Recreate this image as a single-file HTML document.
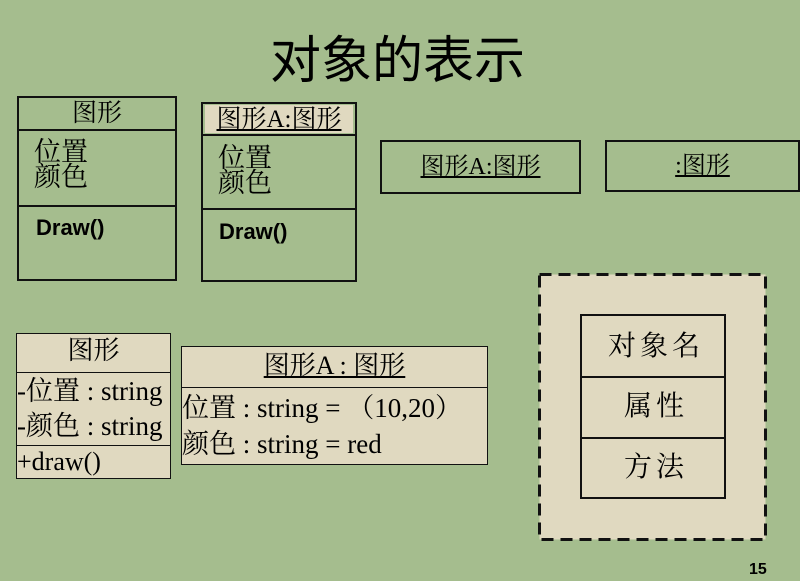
<!DOCTYPE html>
<html><head><meta charset="utf-8"><style>
*{margin:0;padding:0;box-sizing:border-box}
body{width:800px;height:581px;background:#a5bd8e;position:relative;overflow:hidden;font-family:"Liberation Serif","Noto Serif CJK SC",serif;color:#000}
.a{position:absolute}
.b{position:absolute;border:2px solid #111}
.h{position:absolute;left:0;right:0;border-top:2px solid #111}
.t{position:absolute;left:0;right:0;text-align:center;white-space:nowrap;line-height:1}
.s{font-family:"Liberation Sans","Noto Sans CJK SC",sans-serif}
.l{position:absolute;white-space:nowrap;line-height:1}
.bg{background:#e0d9c0}
.thin{border-width:1px}
.thin .h{border-top-width:1px}
</style></head><body>
<div class="a s" style="left:270px;top:35px;font-size:51px;line-height:1">对象的表示</div>

<div class="b" style="left:17px;top:96px;width:160px;height:185px">
 <div class="t" style="top:3px;font-size:25px">图形</div>
 <div class="h" style="top:31px"></div>
 <div class="l" style="left:15px;top:42px;font-size:27px;line-height:25px">位置<br>颜色</div>
 <div class="h" style="top:107px"></div>
 <div class="l s" style="left:17px;top:119px;font-size:22px;font-weight:bold">Draw()</div>
</div>

<div class="b" style="left:201px;top:102px;width:156px;height:180px">
 <div class="a bg" style="left:2px;top:1px;right:2px;height:28px"></div>
 <div class="t" style="top:3px;font-size:25px;text-decoration:underline">图形A:图形</div>
 <div class="h" style="top:30px"></div>
 <div class="l" style="left:15px;top:42px;font-size:27px;line-height:25px">位置<br>颜色</div>
 <div class="h" style="top:104px"></div>
 <div class="l s" style="left:16px;top:117px;font-size:22px;font-weight:bold">Draw()</div>
</div>

<div class="b" style="left:380px;top:140px;width:201px;height:54px">
 <div class="t" style="top:13px;font-size:24px;text-decoration:underline">图形A:图形</div>
</div>
<div class="b" style="left:605px;top:140px;width:195px;height:52px">
 <div class="t" style="top:12px;font-size:24px;text-decoration:underline">:图形</div>
</div>

<div class="b bg thin" style="left:16px;top:333px;width:155px;height:146px">
 <div class="t" style="top:4px;font-size:26px">图形</div>
 <div class="h" style="top:38px"></div>
 <div class="l" style="left:0;top:40px;font-size:27px;line-height:35px">-位置 : string<br>-颜色 : string</div>
 <div class="h" style="top:111px"></div>
 <div class="l" style="left:0;top:115px;font-size:26px">+draw()</div>
</div>

<div class="b bg thin" style="left:181px;top:346px;width:307px;height:119px">
 <div class="t" style="top:6px;font-size:26px"><span style="text-decoration:underline">图形A : 图形</span></div>
 <div class="h" style="top:40px"></div>
 <div class="l" style="left:0;top:43px;font-size:27px;line-height:36px">位置 : string = （10,20）<br>颜色 : string = red</div>
</div>

<svg class="a" style="left:538px;top:273px" width="229" height="268">
 <rect x="1.5" y="1.5" width="226" height="265" fill="#e0d9c0" stroke="#111" stroke-width="3" stroke-dasharray="12,7"/>
</svg>
<div class="b" style="left:580px;top:314px;width:146px;height:185px;border-width:2px">
 <div class="l" style="left:26px;top:17px;font-size:28px;letter-spacing:4px">对象名</div>
 <div class="h" style="top:60px"></div>
 <div class="l" style="left:42px;top:77px;font-size:28px;letter-spacing:4px">属性</div>
 <div class="h" style="top:121px"></div>
 <div class="l" style="left:42px;top:138px;font-size:28px;letter-spacing:4px">方法</div>
</div>

<div class="l s" style="left:749px;top:562px;font-size:16px;font-weight:bold">15</div>
</body></html>
